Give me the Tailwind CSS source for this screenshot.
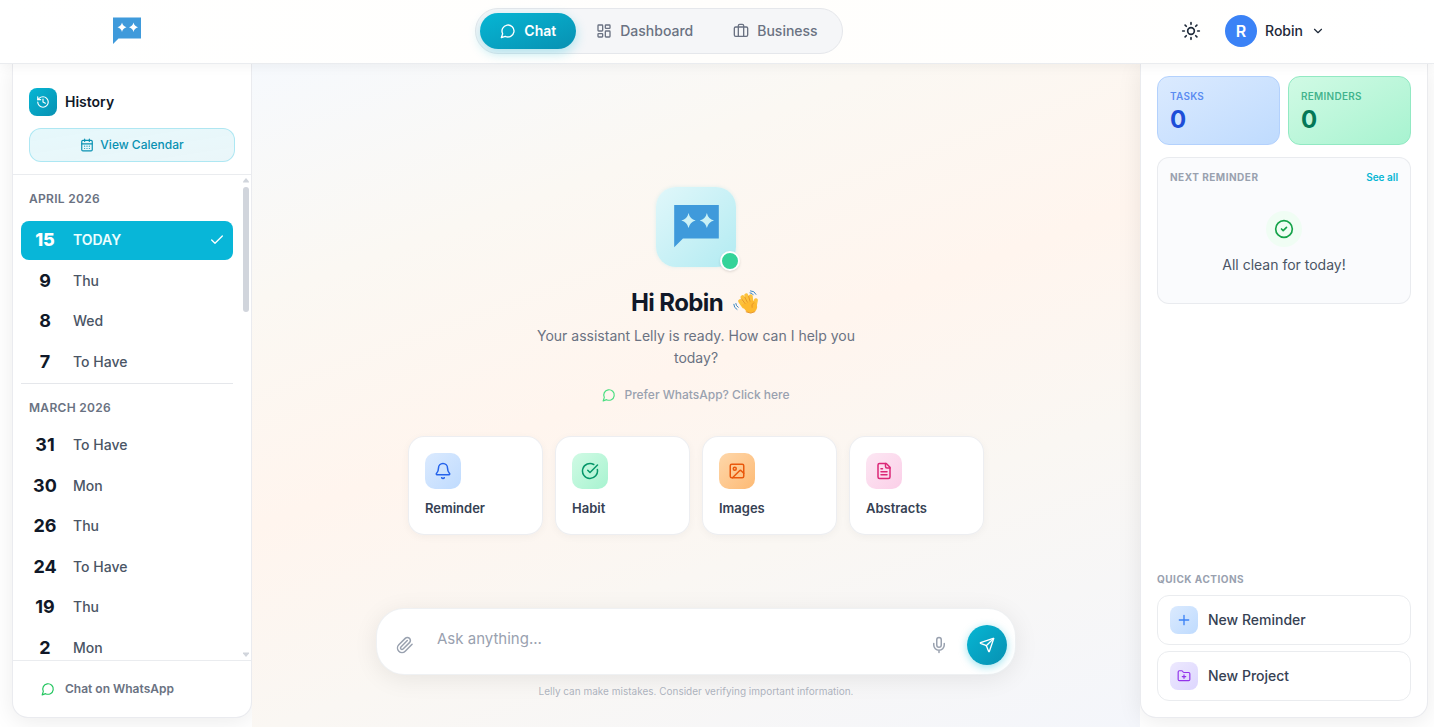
<!DOCTYPE html>
<html lang="en">
<head>
    <meta charset="UTF-8">
    <meta name="viewport" content="width=device-width, initial-scale=1.0">
    <title>Lelly - Chat</title>
    <script src="https://cdn.jsdelivr.net/npm/@tailwindcss/browser@4"></script>
</head>
<body class="h-screen flex flex-col overflow-hidden bg-white text-gray-900 font-['Inter',sans-serif]">

    <!-- Icons -->
    <svg class="hidden" aria-hidden="true">
        <symbol id="i-logo" viewBox="0 0 32 32">
            <path fill="#3f9adb" fill-rule="evenodd" d="M2 2.500H30V23.500H7.500L2 29ZM11 7.500Q11.800 11.300 15.500 12.200Q11.800 13.100 11 17Q10.200 13.100 6.500 12.200Q10.200 11.300 11 7.500ZM22.500 7.500Q23.300 11.300 27 12.200Q23.300 13.100 22.500 17Q21.700 13.100 18 12.200Q21.700 11.300 22.500 7.500Z"/>
        </symbol>
        <symbol id="i-message" viewBox="0 0 24 24"><path d="M7.900 20A9 9 0 1 0 4 16.100L2 22Z"/></symbol>
        <symbol id="i-check" viewBox="0 0 24 24"><path d="M20 6 9 17l-5-5"/></symbol>
    </svg>

    <header class="relative z-10 shrink-0 h-16 border-b border-gray-200/80 bg-linear-to-r from-white via-[#fffefc] to-white shadow-[0_2px_12px_rgba(0,0,0,0.05)]">
        <div class="max-w-7xl h-full mx-auto px-8 pb-px flex items-center justify-between">
            <a href="#" aria-label="Lelly" class="w-9 flex justify-center">
                <svg class="size-8"><use href="#i-logo"/></svg>
            </a>

            <nav class="flex items-center p-1 rounded-full border border-gray-200 bg-gray-100/80 text-sm font-medium text-gray-500">
                <a href="#" class="h-9 px-5 flex items-center gap-2 rounded-full bg-linear-to-br from-[#06b6d4] to-[#0891b2] text-white font-semibold shadow-[0_4px_12px_rgba(6,182,212,0.3)]">
                    <svg class="size-4" fill="none" stroke="currentColor" stroke-width="2" stroke-linecap="round" stroke-linejoin="round"><use href="#i-message"/></svg>
                    Chat
                </a>
                <a href="#" class="h-9 px-5 flex items-center gap-2 rounded-full">
                    <svg class="size-4" viewBox="0 0 24 24" fill="none" stroke="currentColor" stroke-width="2" stroke-linecap="round" stroke-linejoin="round"><rect width="7" height="9" x="3" y="3" rx="1"/><rect width="7" height="5" x="14" y="3" rx="1"/><rect width="7" height="9" x="14" y="12" rx="1"/><rect width="7" height="5" x="3" y="16" rx="1"/></svg>
                    Dashboard
                </a>
                <a href="#" class="h-9 px-5 flex items-center gap-2 rounded-full">
                    <svg class="size-4" viewBox="0 0 24 24" fill="none" stroke="currentColor" stroke-width="2" stroke-linecap="round" stroke-linejoin="round"><path d="M16 20V4a2 2 0 0 0-2-2h-4a2 2 0 0 0-2 2v16"/><rect width="20" height="14" x="2" y="6" rx="2"/></svg>
                    Business
                </a>
            </nav>

            <div class="flex items-center gap-4 text-gray-800">
                <button type="button" aria-label="Toggle theme" class="size-9 flex items-center justify-center">
                    <svg class="size-5" viewBox="0 0 24 24" fill="none" stroke="currentColor" stroke-width="2" stroke-linecap="round" stroke-linejoin="round"><circle cx="12" cy="12" r="4"/><path d="M12 2v2M12 20v2M4.930 4.930l1.410 1.410M17.660 17.660l1.410 1.410M2 12h2M20 12h2M6.340 17.660l-1.410 1.410M19.070 4.930l-1.410 1.410"/></svg>
                </button>
                <button type="button" class="flex items-center gap-2 text-sm font-medium">
                    <span class="size-8 rounded-full bg-[#3b82f6] text-white text-base font-semibold flex items-center justify-center">R</span>
                    Robin
                    <svg class="size-3.5" viewBox="0 0 24 24" fill="none" stroke="currentColor" stroke-width="2" stroke-linecap="round" stroke-linejoin="round"><path d="m6 9 6 6 6-6"/></svg>
                </button>
            </div>
        </div>
    </header>

    <div class="flex-1 min-h-0 flex">
        <!-- History -->
        <div class="w-[252px] shrink-0 pl-3 pb-[9px]">
            <aside class="h-full flex flex-col rounded-b-2xl border border-t-0 border-gray-200/80 bg-white shadow-[0_4px_24px_rgba(0,0,0,0.08)]">
                <div class="px-4 pt-6 pb-3 border-b border-gray-200/80">
                    <div class="flex items-center gap-2">
                        <span class="size-7 rounded-lg bg-linear-to-br from-[#06b6d4] to-[#0891b2] text-white flex items-center justify-center">
                            <svg class="size-3.5" viewBox="0 0 24 24" fill="none" stroke="currentColor" stroke-width="2" stroke-linecap="round" stroke-linejoin="round"><path d="M3 12a9 9 0 1 0 9-9 9.750 9.750 0 0 0-6.740 2.740L3 8"/><path d="M3 3v5h5"/><path d="M12 7v5l4 2"/></svg>
                        </span>
                        <h2 class="text-sm font-semibold">History</h2>
                    </div>
                    <button type="button" class="mt-3 w-full h-[34px] rounded-xl border border-cyan-500/25 bg-linear-to-br from-cyan-500/10 to-cyan-600/8 text-xs font-medium text-[#0891b2] flex items-center justify-center gap-1.5">
                        <svg class="size-3.5" viewBox="0 0 24 24" fill="none" stroke="currentColor" stroke-width="2" stroke-linecap="round" stroke-linejoin="round"><path d="M8 2v4M16 2v4"/><rect width="18" height="18" x="3" y="4" rx="2"/><path d="M3 10h18M8 14h.010M12 14h.010M16 14h.010M8 18h.010M12 18h.010M16 18h.010"/></svg>
                        View Calendar
                    </button>
                </div>

                <div class="flex-1 min-h-0 flex">
                    <div class="flex-1 px-2 pt-4 overflow-hidden text-sm font-medium text-gray-600">
                        <h3 class="px-2 mb-3.5 text-xs font-semibold tracking-wide text-gray-500">APRIL 2026</h3>
                        <ul class="flex flex-col gap-0.5 pb-0.5 border-b border-gray-200">
                            <li><a href="#" class="px-2 py-2 flex items-center gap-3 rounded-lg bg-[#08b6d8] text-cyan-50 font-semibold">
                                <span class="w-8 text-center text-lg leading-tight font-extrabold text-white">15</span>
                                <span class="flex-1">TODAY</span>
                                <svg class="size-4 text-white" fill="none" stroke="currentColor" stroke-width="2" stroke-linecap="round" stroke-linejoin="round"><use href="#i-check"/></svg>
                            </a></li>
                            <li><a href="#" class="px-2 py-2 flex items-center gap-3"><span class="w-8 text-center text-lg leading-tight font-bold text-gray-900">9</span>Thu</a></li>
                            <li><a href="#" class="px-2 py-2 flex items-center gap-3"><span class="w-8 text-center text-lg leading-tight font-bold text-gray-900">8</span>Wed</a></li>
                            <li><a href="#" class="px-2 py-2 flex items-center gap-3"><span class="w-8 text-center text-lg leading-tight font-bold text-gray-900">7</span>To Have</a></li>
                        </ul>
                        <h3 class="px-2 mt-4 mb-2.5 text-xs font-semibold tracking-wide text-gray-500">MARCH 2026</h3>
                        <ul class="flex flex-col gap-0.5">
                            <li><a href="#" class="px-2 py-2 flex items-center gap-3"><span class="w-8 text-center text-lg leading-tight font-bold text-gray-900">31</span>To Have</a></li>
                            <li><a href="#" class="px-2 py-2 flex items-center gap-3"><span class="w-8 text-center text-lg leading-tight font-bold text-gray-900">30</span>Mon</a></li>
                            <li><a href="#" class="px-2 py-2 flex items-center gap-3"><span class="w-8 text-center text-lg leading-tight font-bold text-gray-900">26</span>Thu</a></li>
                            <li><a href="#" class="px-2 py-2 flex items-center gap-3"><span class="w-8 text-center text-lg leading-tight font-bold text-gray-900">24</span>To Have</a></li>
                            <li><a href="#" class="px-2 py-2 flex items-center gap-3"><span class="w-8 text-center text-lg leading-tight font-bold text-gray-900">19</span>Thu</a></li>
                            <li><a href="#" class="px-2 py-2 flex items-center gap-3"><span class="w-8 text-center text-lg leading-tight font-bold text-gray-900">2</span>Mon</a></li>
                        </ul>
                    </div>
                    <!-- Scrollbar -->
                    <div class="w-2.5 shrink-0 py-0.5 flex flex-col items-center text-gray-300" aria-hidden="true">
                        <svg class="w-1.5 h-2" viewBox="0 0 6 8" fill="currentColor"><path d="M3 1 6 4.500V5.500H0V4.500Z"/></svg>
                        <div class="mt-0.5 w-1.5 h-[125px] rounded-full bg-gray-300"></div>
                        <svg class="mt-auto w-1.5 h-2" viewBox="0 0 6 8" fill="currentColor"><path d="M3 7 6 3.500V2.500H0V3.500Z"/></svg>
                    </div>
                </div>

                <div class="px-4 py-3 border-t border-gray-200/80">
                    <a href="#" class="h-8 px-3 flex items-center gap-2.5 text-xs font-semibold text-gray-500">
                        <svg class="size-3.5 text-[#22c55e]" fill="none" stroke="currentColor" stroke-width="2" stroke-linecap="round" stroke-linejoin="round"><use href="#i-message"/></svg>
                        Chat on WhatsApp
                    </a>
                </div>
            </aside>
        </div>

        <!-- Chat -->
        <main class="flex-1 min-w-0 flex flex-col bg-[linear-gradient(160deg,#f6f9fd_0%,#fbf8f3_24%,#fff5ee_47%,#faf7f3_68%,#f4f6fb_100%)]">
            <div class="flex-1 min-h-0 pt-[58px] px-4 flex flex-col items-center justify-center">
                <div class="relative size-20 rounded-[20px] bg-linear-to-br from-[#e0f7fa] to-[#b2ebf2] shadow-[0_0_4px_rgba(6,182,212,0.12)] flex items-center justify-center">
                    <svg class="size-[51px]"><use href="#i-logo"/></svg>
                    <span class="absolute -bottom-1 -right-1 size-5 rounded-full border-2 border-white bg-[#34d399] shadow-sm"></span>
                </div>
                <h1 class="mt-5 flex items-center gap-2.5 text-2xl font-bold tracking-tight">
                    Hi Robin
                    <svg class="w-7 h-[26px]" viewBox="0 0 28 26" role="img" aria-label="Waving hand" fill="none" stroke-linecap="round" stroke-linejoin="round">
                        <g transform="rotate(-14 14 15)">
                            <g stroke="#fcc23c" stroke-width="4">
                                <path d="M10.500 15.500 8.300 9.500"/>
                                <path d="M13.500 13.500 11.500 6.300"/>
                                <path d="M16.500 12.500 15.600 5.500"/>
                                <path d="M19 13 19.700 7.500"/>
                                <path d="M23.800 12.500 21.500 17.500"/>
                            </g>
                            <path fill="#fdb92f" d="M8.500 13.500 20.500 11.500 23 15Q24.800 19.500 21 22.800Q16.500 25.500 12 21.500Z"/>
                            <path stroke="#e58e24" stroke-width=".8" d="M10.300 8 12.400 13M13.700 6.800 15 12.200M17.700 6.800 17.800 12M20.800 14.500Q18 15.500 18.300 18.500M11.500 21.500Q15.500 25.300 20 23.500"/>
                        </g>
                        <path stroke="#3b87c4" stroke-width="1" d="M17.500.8Q21.500.8 23 4.300M17 2.800Q19.500 3 20.300 4.800M.8 14.300Q.8 17.800 4 19.500M2.800 13.500Q3 16 5.200 17.300"/>
                    </svg>
                </h1>
                <p class="mt-1.5 max-w-80 text-center text-sm leading-[22px] text-gray-500">Your assistant Lelly is ready. How can I help you today?</p>
                <a href="#" class="mt-[18px] mb-[33px] flex items-center gap-2 text-xs font-medium text-gray-400">
                    <svg class="size-3.5 text-[#4ade80]" fill="none" stroke="currentColor" stroke-width="2" stroke-linecap="round" stroke-linejoin="round"><use href="#i-message"/></svg>
                    Prefer WhatsApp? Click here
                </a>

                <div class="w-full max-w-xl grid grid-cols-4 gap-3 text-[13px] leading-normal font-semibold text-gray-700">
                    <button type="button" class="p-4 flex flex-col items-start gap-2.5 rounded-2xl border border-gray-200/70 bg-white/95 shadow-[0_2px_8px_rgba(0,0,0,0.04)]">
                        <span class="size-9 rounded-[10px] bg-linear-to-br from-blue-100 to-[#bfdbfe] text-[#2563eb] flex items-center justify-center">
                            <svg class="size-[18px]" viewBox="0 0 24 24" fill="none" stroke="currentColor" stroke-width="2" stroke-linecap="round" stroke-linejoin="round"><path d="M10.268 21a2 2 0 0 0 3.464 0"/><path d="M3.262 15.326A1 1 0 0 0 4 17h16a1 1 0 0 0 .740-1.673C19.410 13.956 18 12.499 18 8A6 6 0 0 0 6 8c0 4.499-1.411 5.956-2.738 7.326"/></svg>
                        </span>
                        Reminder
                    </button>
                    <button type="button" class="p-4 flex flex-col items-start gap-2.5 rounded-2xl border border-gray-200/70 bg-white/95 shadow-[0_2px_8px_rgba(0,0,0,0.04)]">
                        <span class="size-9 rounded-[10px] bg-linear-to-br from-emerald-100 to-[#a7f3d0] text-[#059669] flex items-center justify-center">
                            <svg class="size-[18px]" viewBox="0 0 24 24" fill="none" stroke="currentColor" stroke-width="2" stroke-linecap="round" stroke-linejoin="round"><path d="M21.801 10A10 10 0 1 1 17 3.335"/><path d="m9 11 3 3L22 4"/></svg>
                        </span>
                        Habit
                    </button>
                    <button type="button" class="p-4 flex flex-col items-start gap-2.5 rounded-2xl border border-gray-200/70 bg-white/95 shadow-[0_2px_8px_rgba(0,0,0,0.04)]">
                        <span class="size-9 rounded-[10px] bg-linear-to-br from-[#fed7aa] to-[#fdba74] text-[#ea580c] flex items-center justify-center">
                            <svg class="size-[18px]" viewBox="0 0 24 24" fill="none" stroke="currentColor" stroke-width="2" stroke-linecap="round" stroke-linejoin="round"><rect width="18" height="18" x="3" y="3" rx="2"/><circle cx="9" cy="9" r="2"/><path d="m21 15-3.086-3.086a2 2 0 0 0-2.828 0L6 21"/></svg>
                        </span>
                        Images
                    </button>
                    <button type="button" class="p-4 flex flex-col items-start gap-2.5 rounded-2xl border border-gray-200/70 bg-white/95 shadow-[0_2px_8px_rgba(0,0,0,0.04)]">
                        <span class="size-9 rounded-[10px] bg-linear-to-br from-pink-100 to-[#fbcfe8] text-[#db2777] flex items-center justify-center">
                            <svg class="size-[18px]" viewBox="0 0 24 24" fill="none" stroke="currentColor" stroke-width="2" stroke-linecap="round" stroke-linejoin="round"><path d="M15 2H6a2 2 0 0 0-2 2v16a2 2 0 0 0 2 2h12a2 2 0 0 0 2-2V7Z"/><path d="M14 2v4a2 2 0 0 0 2 2h4M10 9H8M16 13H8M16 17H8"/></svg>
                        </span>
                        Abstracts
                    </button>
                </div>
            </div>

            <div class="w-full max-w-2xl mx-auto px-4 pt-2 pb-7">
                <form class="px-2 pt-2 pb-[9px] flex items-end gap-2 rounded-[28px] border border-gray-200/60 bg-white shadow-[0_4px_24px_rgba(0,0,0,0.08)]">
                    <button type="button" aria-label="Attach file" class="size-10 shrink-0 flex items-center justify-center text-gray-400">
                        <svg class="size-[18px]" viewBox="0 0 24 24" fill="none" stroke="currentColor" stroke-width="2" stroke-linecap="round" stroke-linejoin="round"><path d="m21.440 11.050-9.190 9.190a6 6 0 0 1-8.490-8.490l8.570-8.570A4 4 0 1 1 18 8.840l-8.590 8.570a2 2 0 0 1-2.830-2.830l8.490-8.480"/></svg>
                    </button>
                    <textarea rows="1" aria-label="Message" placeholder="Ask anything..." class="flex-1 min-w-0 h-12 px-1 py-2.5 resize-none overflow-hidden outline-none bg-transparent text-[15px] leading-6 placeholder:text-gray-400"></textarea>
                    <button type="button" aria-label="Record voice" class="size-10 shrink-0 flex items-center justify-center text-gray-400">
                        <svg class="size-[18px]" viewBox="0 0 24 24" fill="none" stroke="currentColor" stroke-width="2" stroke-linecap="round" stroke-linejoin="round"><path d="M12 2a3 3 0 0 0-3 3v7a3 3 0 0 0 6 0V5a3 3 0 0 0-3-3Z"/><path d="M19 10v2a7 7 0 0 1-14 0v-2M12 19v3"/></svg>
                    </button>
                    <button type="submit" aria-label="Send" class="size-10 shrink-0 rounded-full bg-linear-to-br from-[#06b6d4] to-[#0891b2] text-white shadow-[0_2px_8px_rgba(6,182,212,0.4)] flex items-center justify-center">
                        <svg class="size-4" viewBox="0 0 24 24" fill="none" stroke="currentColor" stroke-width="2" stroke-linecap="round" stroke-linejoin="round"><path d="M14.536 21.686a.5.5 0 0 0 .937-.024l6.500-19a.496.496 0 0 0-.635-.635l-19 6.500a.5.5 0 0 0-.024.937l7.930 3.180a2 2 0 0 1 1.112 1.110z"/><path d="m21.854 2.147-10.940 10.939"/></svg>
                    </button>
                </form>
                <p class="mt-2 text-center text-[10px] leading-4 text-gray-400/80">Lelly can make mistakes. Consider verifying important information.</p>
            </div>
        </main>

        <!-- Summary -->
        <div class="w-[294px] shrink-0 pr-1.5 pb-[9px]">
            <aside class="h-full px-4 pt-3 pb-4 flex flex-col rounded-b-2xl border border-t-0 border-gray-200/80 bg-white shadow-[0_4px_24px_rgba(0,0,0,0.08)]">
                <div class="grid grid-cols-2 gap-2">
                    <div class="p-3 rounded-xl border border-[#b3d1fd] bg-linear-to-br from-blue-100 to-[#bfdbfe]">
                        <p class="text-[10px] leading-[15px] font-semibold tracking-wide text-[#2563eb]/70">TASKS</p>
                        <p class="mt-1 text-2xl leading-6 font-bold text-[#1d4ed8]">0</p>
                    </div>
                    <div class="p-3 rounded-xl border border-[#92e9c3] bg-linear-to-br from-emerald-100 to-[#a7f3d0]">
                        <p class="text-[10px] leading-[15px] font-semibold tracking-wide text-[#059669]/70">REMINDERS</p>
                        <p class="mt-1 text-2xl leading-6 font-bold text-[#047857]">0</p>
                    </div>
                </div>

                <section class="mt-3 px-3 pt-3 pb-7 rounded-xl border border-gray-200/80 bg-[#fafbfd]">
                    <div class="flex items-center justify-between text-[10px] leading-[15px] font-bold">
                        <h2 class="tracking-wider text-gray-400">NEXT REMINDER</h2>
                        <a href="#" class="font-semibold text-[#06b6d4]">See all</a>
                    </div>
                    <div class="mt-[26px] flex flex-col items-center gap-2">
                        <span class="size-9 rounded-full bg-green-50 text-[#16a34a] flex items-center justify-center">
                            <svg class="size-5" viewBox="0 0 24 24" fill="none" stroke="currentColor" stroke-width="2" stroke-linecap="round" stroke-linejoin="round"><circle cx="12" cy="12" r="10"/><path d="m9 12 2 2 4-4"/></svg>
                        </span>
                        <p class="text-sm text-gray-600">All clean for today!</p>
                    </div>
                </section>

                <section class="mt-auto">
                    <h2 class="mb-2 text-[10px] leading-[15px] font-bold tracking-wider text-gray-400">QUICK ACTIONS</h2>
                    <div class="flex flex-col gap-1.5 text-sm font-medium text-gray-700">
                        <button type="button" class="h-[50px] px-3 flex items-center gap-2.5 rounded-xl border border-gray-200/80">
                            <span class="size-7 rounded-lg bg-linear-to-br from-blue-100 to-[#bfdbfe] text-[#3b82f6] flex items-center justify-center">
                                <svg class="size-4" viewBox="0 0 24 24" fill="none" stroke="currentColor" stroke-width="2" stroke-linecap="round" stroke-linejoin="round"><path d="M5 12h14M12 5v14"/></svg>
                            </span>
                            New Reminder
                        </button>
                        <button type="button" class="h-[50px] px-3 flex items-center gap-2.5 rounded-xl border border-gray-200/80">
                            <span class="size-7 rounded-lg bg-linear-to-br from-[#ede9fe] to-[#ddd6fe] text-[#9333ea] flex items-center justify-center">
                                <svg class="size-3.5" viewBox="0 0 24 24" fill="none" stroke="currentColor" stroke-width="2" stroke-linecap="round" stroke-linejoin="round"><path d="M12 10v6M9 13h6"/><path d="M20 20a2 2 0 0 0 2-2V8a2 2 0 0 0-2-2h-7.900a2 2 0 0 1-1.690-.9L9.600 3.900A2 2 0 0 0 7.930 3H4a2 2 0 0 0-2 2v13a2 2 0 0 0 2 2Z"/></svg>
                            </span>
                            New Project
                        </button>
                    </div>
                </section>
            </aside>
        </div>
    </div>
</body>
</html>
